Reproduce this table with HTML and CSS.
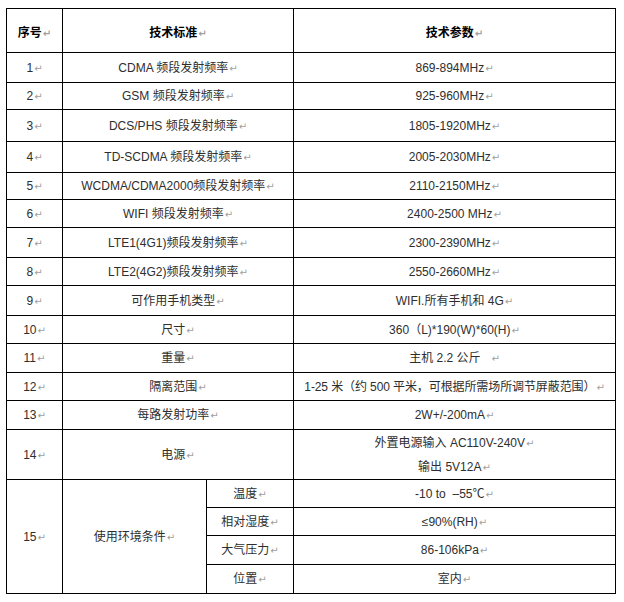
FILE: index.html
```html
<!DOCTYPE html>
<html lang="zh-CN">
<head>
<meta charset="utf-8">
<title>技术参数</title>
<link rel="stylesheet" href="styles.css">
</head>
<body>
<table class="spec">
  <colgroup>
    <col class="c-no">
    <col class="c-std">
    <col class="c-sub">
    <col class="c-val">
  </colgroup>
  <tbody>
    <tr class="h44 head"><td>序号<i>↵</i></td><td colspan="2">技术标准<i>↵</i></td><td>技术参数<i>↵</i></td></tr>
    <tr class="h30"><td>1<i>↵</i></td><td colspan="2">CDMA 频段发射频率<i>↵</i></td><td>869-894MHz<i>↵</i></td></tr>
    <tr class="h27"><td>2<i>↵</i></td><td colspan="2">GSM 频段发射频率<i>↵</i></td><td>925-960MHz<i>↵</i></td></tr>
    <tr class="h32"><td>3<i>↵</i></td><td colspan="2">DCS/PHS 频段发射频率<i>↵</i></td><td>1805-1920MHz<i>↵</i></td></tr>
    <tr class="h31"><td>4<i>↵</i></td><td colspan="2">TD-SCDMA 频段发射频率<i>↵</i></td><td>2005-2030MHz<i>↵</i></td></tr>
    <tr class="h27"><td>5<i>↵</i></td><td colspan="2">WCDMA/CDMA2000频段发射频率<i>↵</i></td><td>2110-2150MHz<i>↵</i></td></tr>
    <tr class="h28"><td>6<i>↵</i></td><td colspan="2">WIFI 频段发射频率<i>↵</i></td><td>2400-2500 MHz<i>↵</i></td></tr>
    <tr class="h30"><td>7<i>↵</i></td><td colspan="2">LTE1(4G1)频段发射频率<i>↵</i></td><td>2300-2390MHz<i>↵</i></td></tr>
    <tr class="h28"><td>8<i>↵</i></td><td colspan="2">LTE2(4G2)频段发射频率<i>↵</i></td><td>2550-2660MHz<i>↵</i></td></tr>
    <tr class="h30"><td>9<i>↵</i></td><td colspan="2">可作用手机类型<i>↵</i></td><td>WIFI.所有手机和 4G<i>↵</i></td></tr>
    <tr class="h28"><td>10<i>↵</i></td><td colspan="2">尺寸<i>↵</i></td><td>360（L)*190(W)*60(H)<i>↵</i></td></tr>
    <tr class="h29"><td>11<i>↵</i></td><td colspan="2">重量<i>↵</i></td><td>主机 2.2 公斤&nbsp;&nbsp;&nbsp;<i>↵</i></td></tr>
    <tr class="h28"><td>12<i>↵</i></td><td colspan="2">隔离范围<i>↵</i></td><td class="tight">1-25 米（约 500 平米，可根据所需场所调节屏蔽范围）<i>↵</i></td></tr>
    <tr class="h29"><td>13<i>↵</i></td><td colspan="2">每路发射功率<i>↵</i></td><td>2W+/-200mA<i>↵</i></td></tr>
    <tr class="h50"><td>14<i>↵</i></td><td colspan="2">电源<i>↵</i></td><td class="two"><div class="ln">外置电源输入 AC110V-240V<i>↵</i></div><div class="ln">输出 5V12A<i>↵</i></div></td></tr>
    <tr class="h28"><td rowspan="4">15<i>↵</i></td><td rowspan="4">使用环境条件<i>↵</i></td><td>温度<i>↵</i></td><td>-10 to &nbsp;–55℃<i>↵</i></td></tr>
    <tr class="h28"><td>相对湿度<i>↵</i></td><td>≤90%(RH)<i>↵</i></td></tr>
    <tr class="h29"><td>大气压力<i>↵</i></td><td>86-106kPa<i>↵</i></td></tr>
    <tr class="h29"><td>位置<i>↵</i></td><td>室内<i>↵</i></td></tr>
  </tbody>
</table>
</body>
</html>
```
FILE: styles.css
```css
html, body {
  margin: 0;
  padding: 0;
  background: #ffffff;
}

body {
  padding: 8px 0 0 6px;
  font-family: "Liberation Sans", "Noto Sans CJK SC", sans-serif;
  font-size: 12px;
  color: #2e2e2e;
}

.spec {
  border-collapse: collapse;
  table-layout: fixed;
  width: 609px;
}

.c-no { width: 56px; }
.c-std { width: 144px; }
.c-sub { width: 87px; }
.c-val { width: 322px; }

.spec td {
  border: 1px solid #000;
  padding: 0;
  text-align: center;
  vertical-align: middle;
  white-space: nowrap;
  line-height: 14px;
  box-sizing: border-box;
}

.spec td i {
  font-style: normal;
  font-family: "DejaVu Sans", sans-serif;
  font-size: 10px;
  line-height: 1;
  color: #a0a0a0;
  margin-left: 1px;
}

.head td {
  font-weight: bold;
  color: #000;
  padding-top: 4px;
}

.spec td.two {
  padding-top: 1px;
}

.ln {
  height: 24px;
  line-height: 24px;
  overflow: hidden;
}

.spec td.tight {
  letter-spacing: -0.1px;
}

.h27 td { height: 27px; }
.h28 td { height: 28px; }
.h29 td { height: 29px; }
.h30 td { height: 30px; }
.h31 td { height: 31px; }
.h32 td { height: 32px; }
.h44 td { height: 44px; }
.h50 td { height: 50px; }
.h28 td[rowspan], .h50 td[rowspan] { height: auto; }
```
